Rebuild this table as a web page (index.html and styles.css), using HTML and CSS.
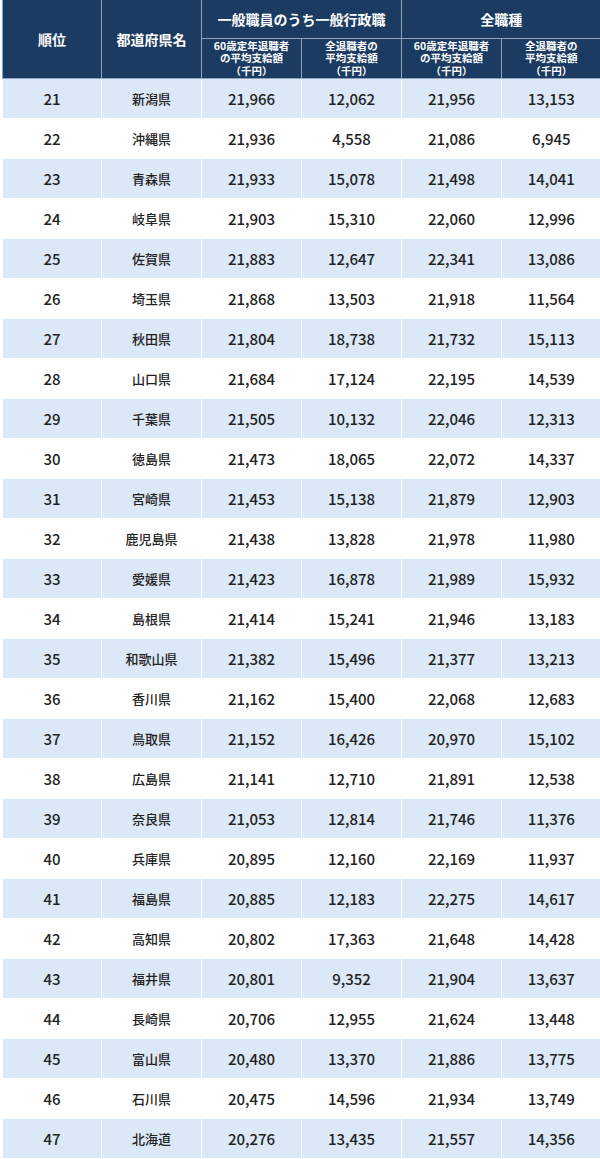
FILE: index.html
```html
<!DOCTYPE html>
<html lang="ja">
<head>
<meta charset="utf-8">
<link rel="stylesheet" href="styles.css">
</head>
<body>
<div class="wrap">
<table class="tbl">
<colgroup><col class="c1"><col class="c2"><col class="c3"><col class="c4"><col class="c5"><col class="c6"></colgroup>
<thead>
<tr class="h1">
<th rowspan="2" class="hmain">順位</th>
<th rowspan="2" class="hmain">都道府県名</th>
<th colspan="2" class="hgroup">一般職員のうち一般行政職</th>
<th colspan="2" class="hgroup">全職種</th>
</tr>
<tr class="h2">
<th class="hsub"><span class="ln">60歳定年退職者</span><span class="ln">の平均支給額</span><span class="ln">（千円）</span></th>
<th class="hsub"><span class="ln">全退職者の</span><span class="ln">平均支給額</span><span class="ln">（千円）</span></th>
<th class="hsub"><span class="ln">60歳定年退職者</span><span class="ln">の平均支給額</span><span class="ln">（千円）</span></th>
<th class="hsub"><span class="ln">全退職者の</span><span class="ln">平均支給額</span><span class="ln">（千円）</span></th>
</tr>
</thead>
<tbody>
<tr><td>21</td><td class="pref">新潟県</td><td>21,966</td><td>12,062</td><td>21,956</td><td>13,153</td></tr>
<tr><td>22</td><td class="pref">沖縄県</td><td>21,936</td><td>4,558</td><td>21,086</td><td>6,945</td></tr>
<tr><td>23</td><td class="pref">青森県</td><td>21,933</td><td>15,078</td><td>21,498</td><td>14,041</td></tr>
<tr><td>24</td><td class="pref">岐阜県</td><td>21,903</td><td>15,310</td><td>22,060</td><td>12,996</td></tr>
<tr><td>25</td><td class="pref">佐賀県</td><td>21,883</td><td>12,647</td><td>22,341</td><td>13,086</td></tr>
<tr><td>26</td><td class="pref">埼玉県</td><td>21,868</td><td>13,503</td><td>21,918</td><td>11,564</td></tr>
<tr><td>27</td><td class="pref">秋田県</td><td>21,804</td><td>18,738</td><td>21,732</td><td>15,113</td></tr>
<tr><td>28</td><td class="pref">山口県</td><td>21,684</td><td>17,124</td><td>22,195</td><td>14,539</td></tr>
<tr><td>29</td><td class="pref">千葉県</td><td>21,505</td><td>10,132</td><td>22,046</td><td>12,313</td></tr>
<tr><td>30</td><td class="pref">徳島県</td><td>21,473</td><td>18,065</td><td>22,072</td><td>14,337</td></tr>
<tr><td>31</td><td class="pref">宮崎県</td><td>21,453</td><td>15,138</td><td>21,879</td><td>12,903</td></tr>
<tr><td>32</td><td class="pref">鹿児島県</td><td>21,438</td><td>13,828</td><td>21,978</td><td>11,980</td></tr>
<tr><td>33</td><td class="pref">愛媛県</td><td>21,423</td><td>16,878</td><td>21,989</td><td>15,932</td></tr>
<tr><td>34</td><td class="pref">島根県</td><td>21,414</td><td>15,241</td><td>21,946</td><td>13,183</td></tr>
<tr><td>35</td><td class="pref">和歌山県</td><td>21,382</td><td>15,496</td><td>21,377</td><td>13,213</td></tr>
<tr><td>36</td><td class="pref">香川県</td><td>21,162</td><td>15,400</td><td>22,068</td><td>12,683</td></tr>
<tr><td>37</td><td class="pref">鳥取県</td><td>21,152</td><td>16,426</td><td>20,970</td><td>15,102</td></tr>
<tr><td>38</td><td class="pref">広島県</td><td>21,141</td><td>12,710</td><td>21,891</td><td>12,538</td></tr>
<tr><td>39</td><td class="pref">奈良県</td><td>21,053</td><td>12,814</td><td>21,746</td><td>11,376</td></tr>
<tr><td>40</td><td class="pref">兵庫県</td><td>20,895</td><td>12,160</td><td>22,169</td><td>11,937</td></tr>
<tr><td>41</td><td class="pref">福島県</td><td>20,885</td><td>12,183</td><td>22,275</td><td>14,617</td></tr>
<tr><td>42</td><td class="pref">高知県</td><td>20,802</td><td>17,363</td><td>21,648</td><td>14,428</td></tr>
<tr><td>43</td><td class="pref">福井県</td><td>20,801</td><td>9,352</td><td>21,904</td><td>13,637</td></tr>
<tr><td>44</td><td class="pref">長崎県</td><td>20,706</td><td>12,955</td><td>21,624</td><td>13,448</td></tr>
<tr><td>45</td><td class="pref">富山県</td><td>20,480</td><td>13,370</td><td>21,886</td><td>13,775</td></tr>
<tr><td>46</td><td class="pref">石川県</td><td>20,475</td><td>14,596</td><td>21,934</td><td>13,749</td></tr>
<tr><td>47</td><td class="pref">北海道</td><td>20,276</td><td>13,435</td><td>21,557</td><td>14,356</td></tr>
</tbody>
</table>
</div>
</body>
</html>
```

FILE: styles.css
```css
html, body {
  margin: 0;
  padding: 0;
  background: #ffffff;
}
.wrap {
  padding-left: 2px;
}
.tbl {
  width: 598px;
  table-layout: fixed;
  border-collapse: collapse;
  font-family: "Noto Sans CJK JP", "Noto Sans", sans-serif;
  color: #222222;
  border-left: 1px solid #c9d3de;
}
.c1 { width: 99px; }
.c2, .c3, .c4, .c5 { width: 100px; }
.c6 { width: 99px; }
.tbl th {
  background: #1b3b62;
  color: #ffffff;
  font-weight: 700;
  text-align: center;
  vertical-align: middle;
  border: 1px solid #8fa3bd;
  padding: 0;
}
.tbl thead tr:first-child th { border-top: none; }
.tbl th:last-child { border-right: none; }
.h1 th { height: 38px; }
.h2 th { height: 39px; }
.hmain { font-size: 14px; }
.hgroup { font-size: 14px; }
.hsub {
  font-size: 10.5px;
  font-weight: 700;
}
.hsub .ln {
  display: block;
  height: 12.3px;
  line-height: 12.3px;
}
.tbl td {
  height: 39px;
  padding: 0;
  text-align: center;
  vertical-align: middle;
  font-size: 15px;
  font-weight: 500;
  border: 1px solid #ffffff;
  border-top: none;
}
.tbl td:last-child { border-right: none; }
.tbl td.pref { font-size: 13px; }
.tbl tbody tr:nth-child(odd) td { background: #dbe8f7; }
.tbl tbody tr:nth-child(even) td { background: #ffffff; }
```
